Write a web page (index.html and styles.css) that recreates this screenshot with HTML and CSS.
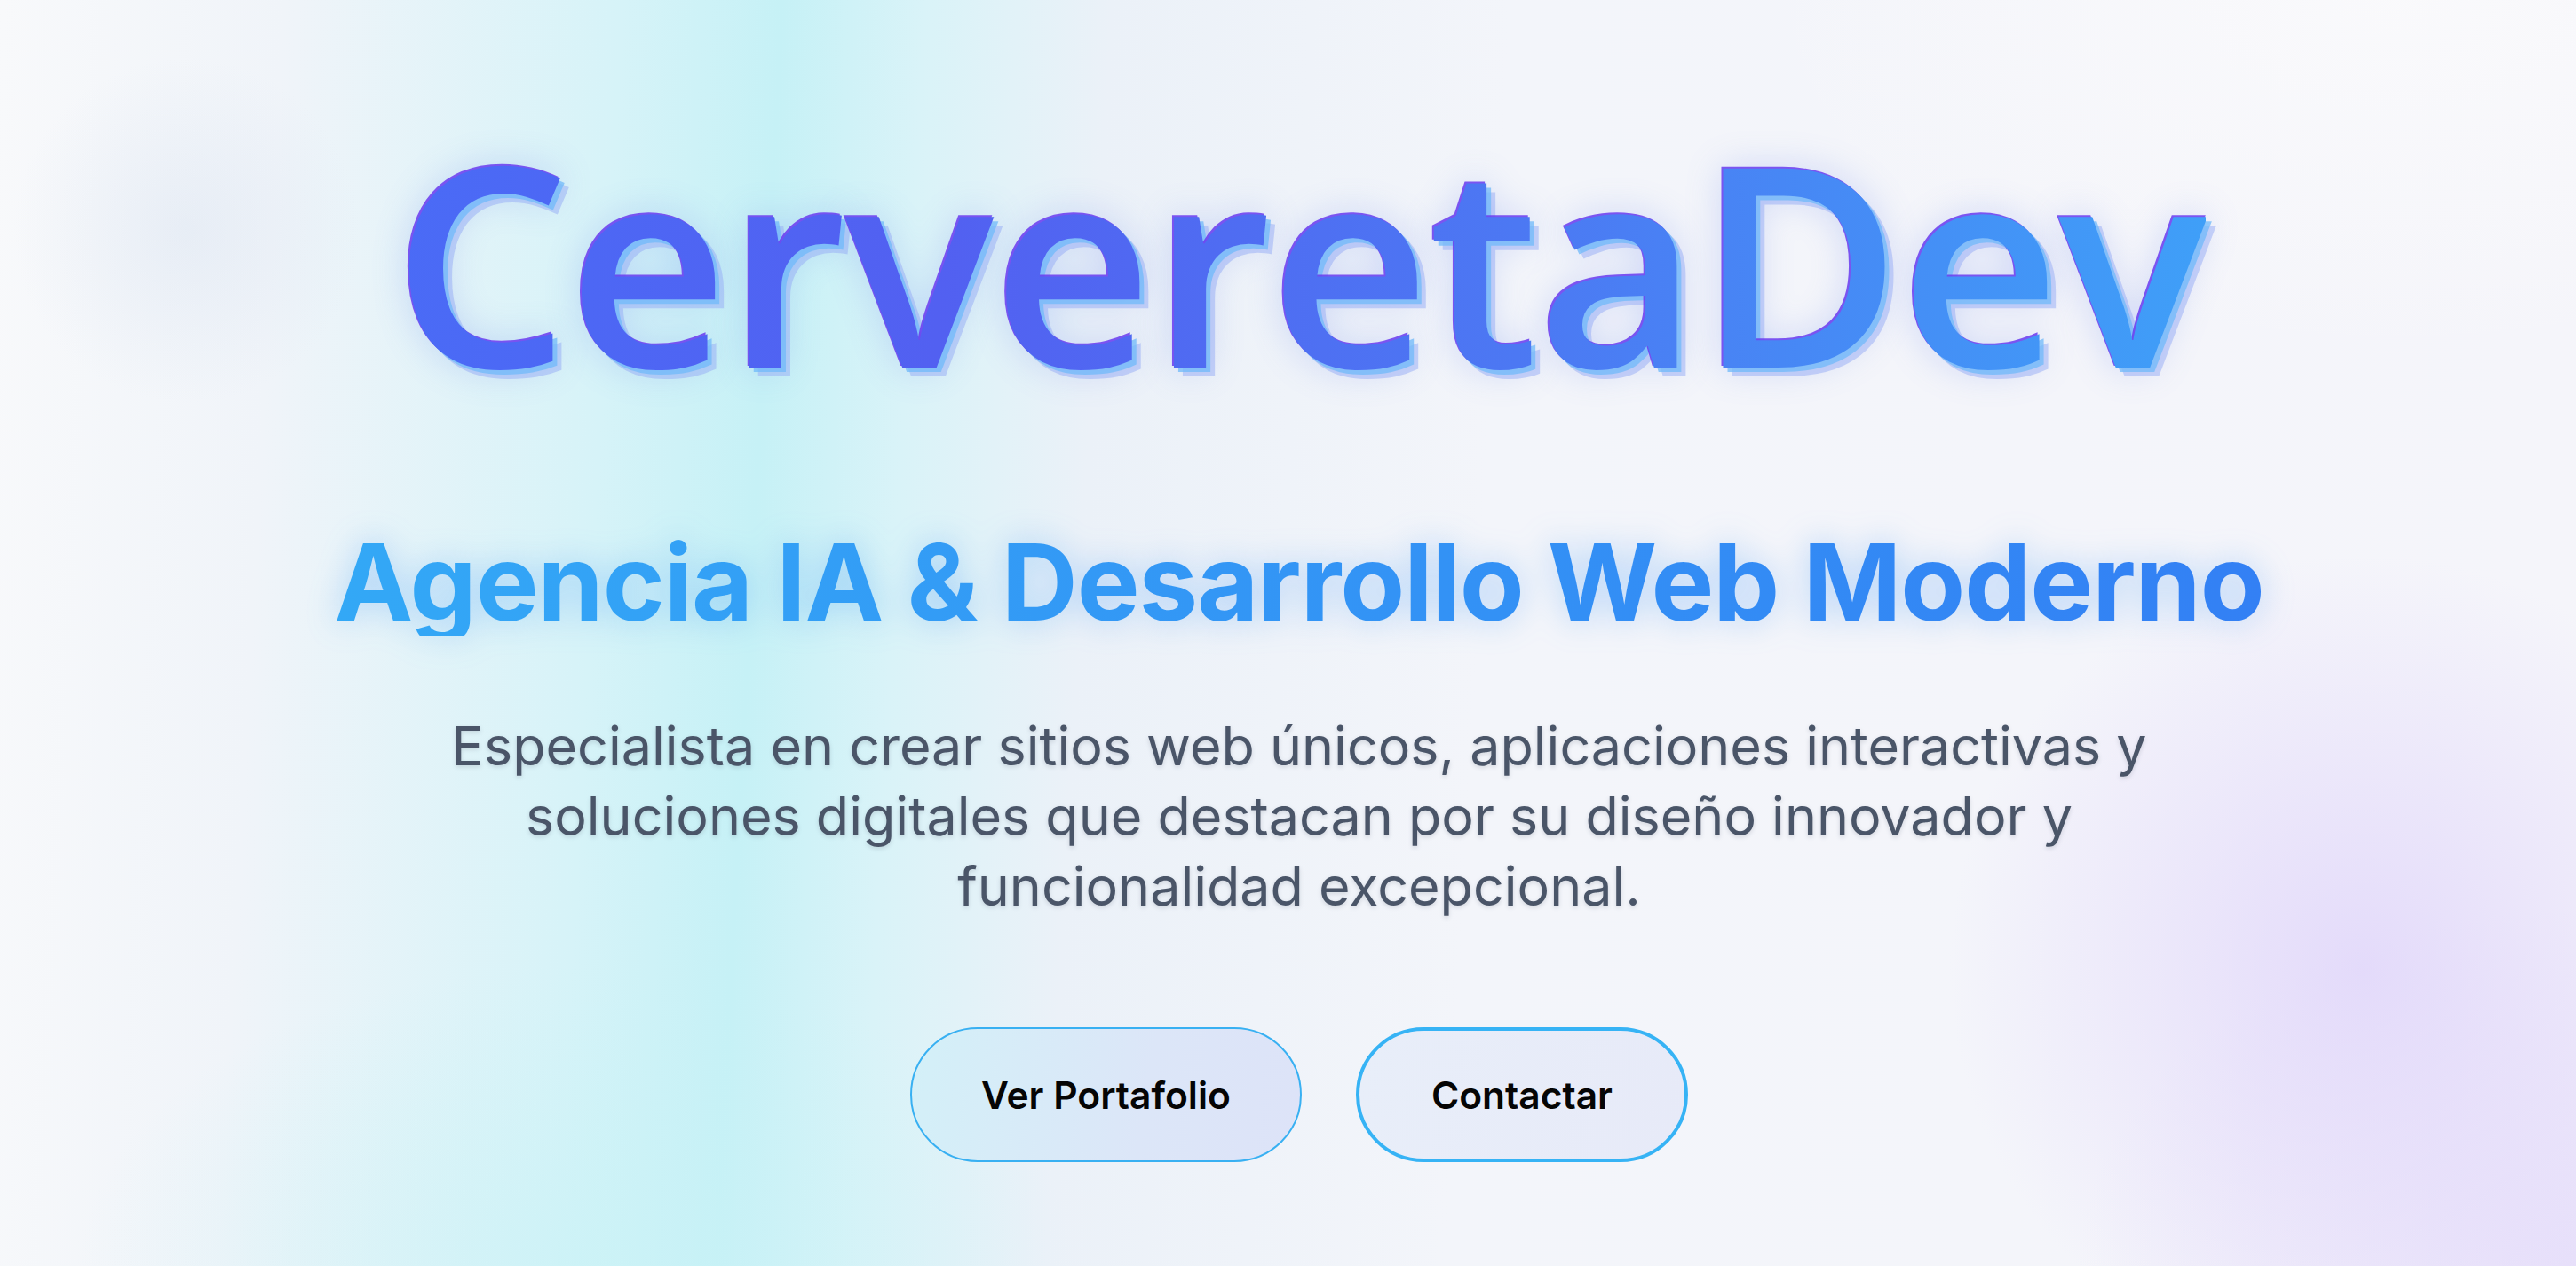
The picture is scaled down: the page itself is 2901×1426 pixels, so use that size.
FILE: index.html
```html
<!DOCTYPE html>
<html lang="es">
<head>
<meta charset="utf-8">
<title>CerveretaDev</title>
<link rel="stylesheet" href="styles.css">
</head>
<body>
<main class="hero">
  <h1 class="brand" data-text="CerveretaDev"><span class="brand-fill">CerveretaDev</span></h1>
  <h2 class="tagline">Agencia IA &amp; Desarrollo Web Moderno</h2>
  <p class="lead">Especialista en crear sitios web únicos, aplicaciones interactivas y soluciones digitales que destacan por su diseño innovador y funcionalidad excepcional.</p>
  <div class="actions">
    <a class="btn btn-primary" href="#portafolio">Ver Portafolio</a>
    <a class="btn btn-outline" href="#contacto">Contactar</a>
  </div>
</main>
</body>
</html>
```

FILE: styles.css
```css
html, body {
  margin: 0;
  padding: 0;
}

body {
  min-height: 100vh;
  overflow: hidden;
  font-family: "Inter", "Liberation Sans", sans-serif;
  background:
    radial-gradient(circle 620px at 2660px 1090px, rgba(222, 210, 250, 0.75), rgba(222, 210, 250, 0) 75%),
    radial-gradient(ellipse 700px 500px at 2901px 1426px, rgba(226, 216, 250, 0.7), rgba(226, 216, 250, 0) 80%),
    radial-gradient(ellipse 700px 420px at 650px 1426px, rgba(200, 242, 246, 0.6), rgba(200, 242, 246, 0) 80%),
    radial-gradient(circle 260px at 210px 260px, rgba(205, 218, 236, 0.3), rgba(205, 218, 236, 0) 75%),
    radial-gradient(ellipse 900px 500px at 2700px 0px, rgba(250, 250, 252, 0.9), rgba(250, 250, 252, 0) 80%),
    linear-gradient(93deg, #f8f9fb 0px, #f0f4f9 320px, #d6f3f8 700px, #c6f1f6 880px, #d9f3f8 1040px, #ebf1f8 1250px, #f3f5fa 1700px, #f5f5fa 2901px);
}

.hero {
  display: flex;
  flex-direction: column;
  align-items: center;
  padding: 135px 0 0 25px;
  text-align: center;
}

.brand {
  display: grid;
  margin: 0;
  font-family: "Open Sans", "Noto Sans", sans-serif;
  font-weight: 600;
  font-size: 314px;
  line-height: 315px;
  letter-spacing: -2px;
}

.brand::before {
  content: attr(data-text);
  grid-area: 1 / 1;
  color: transparent;
  text-shadow:
    -2px -2px 0 rgba(104, 58, 240, 0.85),
    5px 5px 0 rgba(112, 186, 250, 0.75),
    10px 10px 0 rgba(150, 172, 245, 0.5),
    0 0 40px rgba(110, 140, 240, 0.3);
}

.brand-fill {
  grid-area: 1 / 1;
  background: linear-gradient(90deg, #4a6bf6 0%, #5260f1 30%, #4c78f3 62%, #3f9ff8 100%);
  -webkit-background-clip: text;
  background-clip: text;
  color: transparent;
}

.tagline {
  margin: 146px 0 0;
  font-family: "Inter", "Liberation Sans", sans-serif;
  font-weight: 700;
  font-size: 119px;
  line-height: 120px;
  letter-spacing: -1px;
  background: linear-gradient(90deg, #33a8f6 0%, #3391f5 60%, #3380f4 100%);
  -webkit-background-clip: text;
  background-clip: text;
  color: transparent;
  filter: drop-shadow(0 0 18px rgba(59, 150, 246, 0.35));
}

.lead {
  width: 1980px;
  margin: 85px 0 0;
  font-family: "Inter", "Liberation Sans", sans-serif;
  font-weight: 400;
  font-size: 61px;
  line-height: 79px;
  color: #4a5568;
  text-shadow: 0 2px 5px rgba(74, 85, 104, 0.2);
}

.actions {
  display: flex;
  gap: 61px;
  margin-top: 119px;
}

.btn {
  display: inline-flex;
  align-items: center;
  justify-content: center;
  box-sizing: border-box;
  height: 152px;
  padding: 0 78px;
  border-radius: 76px;
  font-family: "Inter", "Liberation Sans", sans-serif;
  font-weight: 600;
  font-size: 42.5px;
  color: #050505;
  text-decoration: none;
}

.btn-primary {
  border: 2px solid #38b0f2;
  background: linear-gradient(100deg, #d3f0f8 0%, #dce6f8 60%, #dde3f8 100%);
}

.btn-outline {
  border: 4px solid #36b3f5;
  padding: 0 81px;
  background: linear-gradient(100deg, #e8eef9 0%, #e7eaf8 100%);
}
```
